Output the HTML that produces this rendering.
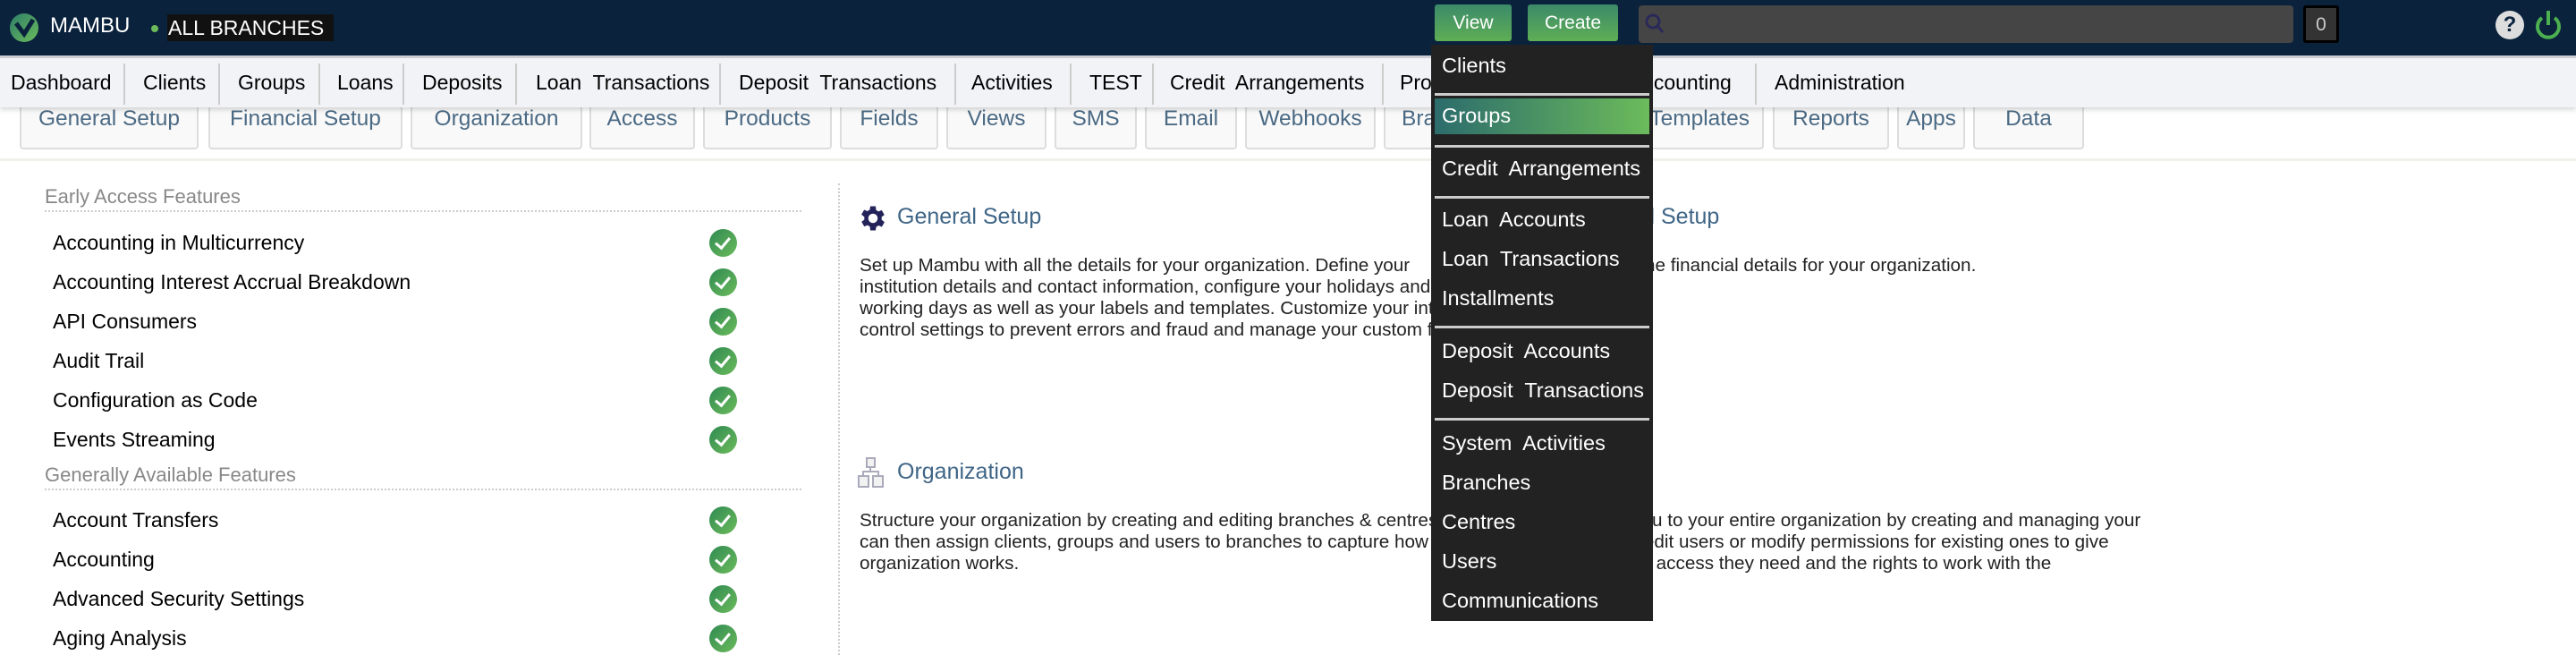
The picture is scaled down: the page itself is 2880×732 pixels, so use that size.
<!DOCTYPE html>
<html><head><meta charset="utf-8"><style>
*{margin:0;padding:0;box-sizing:border-box}
body{width:2880px;height:732px;overflow:hidden;background:#fff;font-family:"Liberation Sans",sans-serif;position:relative}
.a{position:absolute;white-space:nowrap}
#top{position:absolute;left:0;top:0;width:2880px;height:62px;background:#0a223c}
#nav{position:absolute;left:0;top:62px;width:2880px;height:58px;background:#f2f3f7;border-top:3px solid #c9ccd2;box-shadow:0 3px 5px rgba(0,0,0,.15);z-index:3}
.ni{position:absolute;top:14px;font-size:23px;color:#000}
.ns{position:absolute;top:6px;width:2px;height:46px;background:#ccc}
.tab{position:absolute;top:108px;height:59px;background:#f9f9f9;border:2px solid #ddd;border-top:none;border-radius:0 0 4px 4px;color:#4b6a84;font-size:24.5px;text-align:center;padding-top:11px;z-index:1;white-space:nowrap}
.btn{position:absolute;top:5px;height:41px;background:linear-gradient(#3b8a6a,#5fae55);border-radius:3px;color:#fff;font-size:21px;text-align:center;padding-top:9px}
#dd{position:absolute;left:1600px;top:50px;width:248px;height:644px;background:#222;z-index:5}
.di{position:absolute;left:12px;color:#fff;font-size:23.5px;white-space:nowrap}
.dsep{position:absolute;left:4px;width:240px;height:3px;background:#ccc}
.li{position:absolute;left:59px;font-size:23px;color:#000}
.ck{position:absolute;left:793px;width:31px;height:31px;border-radius:50%;background:linear-gradient(135deg,#2f8a52,#6cbb5b)}
.ck:after{content:"";position:absolute;left:10px;top:6px;width:7px;height:13px;border:solid #fff;border-width:0 3px 3px 0;transform:rotate(40deg)}
.hd{position:absolute;font-size:22px;color:#888}
.dl{position:absolute;left:50px;width:846px;border-top:2px dotted #ccc}
.h2{position:absolute;font-size:25px;color:#3f6586}
.p{position:absolute;font-size:20.7px;line-height:24px;color:#222;white-space:pre}
</style></head><body>
<div id="top">
 <svg class="a" style="left:10px;top:14px" width="34" height="34" viewBox="0 0 34 34"><defs><linearGradient id="g" x1="0" y1="0" x2="1" y2="1"><stop offset="0" stop-color="#2d7d6a"/><stop offset="1" stop-color="#6cbb5b"/></linearGradient></defs><circle cx="17" cy="17" r="16" fill="url(#g)"/><path d="M8 12 L17 24 L27 8" stroke="#0a223c" stroke-width="5" fill="none"/></svg>
 <div class="a" style="left:56px;top:15px;color:#fff;font-size:24px">MAMBU</div>
 <div class="a" style="left:169px;top:28px;width:8px;height:8px;border-radius:50%;background:#6cbb5b"></div>
 <div class="a" style="left:187px;top:16px;width:186px;height:30px;background:#111;color:#fff;font-size:23px;padding:2px 0 0 1px">ALL BRANCHES</div>
 <div class="btn" style="left:1604px;width:86px">View</div>
 <div class="btn" style="left:1708px;width:101px">Create</div>
 <div class="a" style="left:1832px;top:6px;width:732px;height:42px;background:#454545;border-radius:4px"></div>
 <svg class="a" style="left:1838px;top:14px" width="24" height="26"><circle cx="10" cy="10" r="7" stroke="#2a2a5a" stroke-width="3" fill="none"/><path d="M15 15 L21 22" stroke="#2a2a5a" stroke-width="3"/></svg>
 <div class="a" style="left:2575px;top:6px;width:40px;height:42px;background:#333;border:3px solid #000;border-radius:3px;color:#ccc;font-size:21px;text-align:center;padding-top:7px">0</div>
 <div class="a" style="left:2790px;top:12px;width:32px;height:32px;border-radius:50%;background:#ddd;color:#0a223c;font-weight:bold;font-size:24px;text-align:center;line-height:32px">?</div>
 <svg class="a" style="left:2832px;top:10px" width="34" height="36"><path d="M10 10 A12 12 0 1 0 24 10" stroke="#4caf50" stroke-width="4" fill="none"/><path d="M17 2 V18" stroke="#4caf50" stroke-width="4"/></svg>
</div>
<div id="nav">
 <div class="ni" style="left:12px">Dashboard</div><div class="ns" style="left:138px"></div>
 <div class="ni" style="left:160px">Clients</div><div class="ns" style="left:244px"></div>
 <div class="ni" style="left:266px">Groups</div><div class="ns" style="left:356px"></div>
 <div class="ni" style="left:377px">Loans</div><div class="ns" style="left:450px"></div>
 <div class="ni" style="left:472px">Deposits</div><div class="ns" style="left:576px"></div>
 <div class="ni" style="left:599px">Loan&nbsp; Transactions</div><div class="ns" style="left:804px"></div>
 <div class="ni" style="left:826px">Deposit&nbsp; Transactions</div><div class="ns" style="left:1067px"></div>
 <div class="ni" style="left:1086px">Activities</div><div class="ns" style="left:1196px"></div>
 <div class="ni" style="left:1218px">TEST</div><div class="ns" style="left:1288px"></div>
 <div class="ni" style="left:1308px">Credit&nbsp; Arrangements</div><div class="ns" style="left:1545px"></div>
 <div class="ni" style="left:1565px">Products</div>
 <div class="ni" style="left:1822px">Accounting</div><div class="ns" style="left:1962px"></div>
 <div class="ni" style="left:1984px">Administration</div>
</div>
<div class="tab" style="left:22px;width:200px">General Setup</div>
<div class="tab" style="left:233px;width:217px">Financial Setup</div>
<div class="tab" style="left:459px;width:192px">Organization</div>
<div class="tab" style="left:659px;width:118px">Access</div>
<div class="tab" style="left:786px;width:144px">Products</div>
<div class="tab" style="left:939px;width:110px">Fields</div>
<div class="tab" style="left:1058px;width:112px">Views</div>
<div class="tab" style="left:1179px;width:92px">SMS</div>
<div class="tab" style="left:1280px;width:103px">Email</div>
<div class="tab" style="left:1392px;width:146px">Webhooks</div>
<div class="tab" style="left:1547px;width:260px;text-align:left;padding-left:18px">Branding</div>
<div class="tab" style="left:1816px;width:156px;text-align:right;padding-right:14px">Templates</div>
<div class="tab" style="left:1982px;width:130px">Reports</div>
<div class="tab" style="left:2121px;width:76px">Apps</div>
<div class="tab" style="left:2206px;width:124px">Data</div>
<div class="a" style="left:0;top:177px;width:2880px;height:3px;background:#f1f1ec"></div>

<div class="hd" style="left:50px;top:207px">Early Access Features</div>
<div class="dl" style="top:235px"></div>
<div class="li" style="top:258px">Accounting in Multicurrency</div><div class="ck" style="top:256px"></div>
<div class="li" style="top:302px">Accounting Interest Accrual Breakdown</div><div class="ck" style="top:300px"></div>
<div class="li" style="top:346px">API Consumers</div><div class="ck" style="top:344px"></div>
<div class="li" style="top:390px">Audit Trail</div><div class="ck" style="top:388px"></div>
<div class="li" style="top:434px">Configuration as Code</div><div class="ck" style="top:432px"></div>
<div class="li" style="top:478px">Events Streaming</div><div class="ck" style="top:476px"></div>
<div class="hd" style="left:50px;top:518px">Generally Available Features</div>
<div class="dl" style="top:546px"></div>
<div class="li" style="top:568px">Account Transfers</div><div class="ck" style="top:566px"></div>
<div class="li" style="top:612px">Accounting</div><div class="ck" style="top:610px"></div>
<div class="li" style="top:656px">Advanced Security Settings</div><div class="ck" style="top:654px"></div>
<div class="li" style="top:700px">Aging Analysis</div><div class="ck" style="top:698px"></div>

<div class="a" style="left:937px;top:205px;height:527px;border-left:2px dotted #ccc"></div>
<svg class="a" style="left:958px;top:226px" width="36" height="36" viewBox="0 0 24 24"><path fill="#23235a" d="M19.4 13a7.5 7.5 0 0 0 0-2l2.1-1.6-2-3.5-2.5 1a7 7 0 0 0-1.7-1L15 3h-4l-.4 2.7a7 7 0 0 0-1.7 1l-2.5-1-2 3.5L6.6 11a7.5 7.5 0 0 0 0 2l-2.1 1.6 2 3.5 2.5-1a7 7 0 0 0 1.7 1L11 21h4l.4-2.7a7 7 0 0 0 1.7-1l2.5 1 2-3.5zM13 15.5a3.5 3.5 0 1 1 0-7 3.5 3.5 0 0 1 0 7z" transform="translate(-1 0)"/></svg>
<div class="h2" style="left:1003px;top:228px">General Setup</div>
<div class="p" style="left:961px;top:285px">Set up Mambu with all the details for your organization. Define your
institution details and contact information, configure your holidays and
working days as well as your labels and templates. Customize your internal
control settings to prevent errors and fraud and manage your custom fields.</div>
<div class="h2" style="left:1750px;top:228px">Financial Setup</div>
<div class="p" style="left:1624px;top:285px">Set up Mambu with all the financial details for your organization.</div>
<svg class="a" style="left:958px;top:510px" width="32" height="36"><g fill="#f2f2f2" stroke="#aab" stroke-width="2"><rect x="11" y="2" width="9" height="10"/><rect x="2" y="22" width="11" height="12"/><rect x="18" y="22" width="11" height="12"/></g><path d="M15 12 V17 H7 V22 M15 17 H24 V22" stroke="#aab" stroke-width="2" fill="none"/></svg>
<div class="h2" style="left:1003px;top:513px">Organization</div>
<div class="p" style="left:961px;top:570px">Structure your organization by creating and editing branches &amp; centres. You
can then assign clients, groups and users to branches to capture how your
organization works.</div>
<div class="p" style="left:1624px;top:570px">Control access to Mambu to your entire organization by creating and managing your
users. Create new and edit users or modify permissions for existing ones to give
them exactly the level of access they need and the rights to work with the</div>

<div id="dd">
 <div class="di" style="top:10px">Clients</div>
 <div class="dsep" style="top:54px"></div>
 <div class="a" style="left:4px;top:60px;width:240px;height:40px;background:linear-gradient(90deg,#2c6c6c,#6cbb5b)"></div>
 <div class="di" style="top:66px">Groups</div>
 <div class="dsep" style="top:112px"></div>
 <div class="di" style="top:125px">Credit&nbsp; Arrangements</div>
 <div class="dsep" style="top:169px"></div>
 <div class="di" style="top:182px">Loan&nbsp; Accounts</div>
 <div class="di" style="top:226px">Loan&nbsp; Transactions</div>
 <div class="di" style="top:270px">Installments</div>
 <div class="dsep" style="top:314px"></div>
 <div class="di" style="top:329px">Deposit&nbsp; Accounts</div>
 <div class="di" style="top:373px">Deposit&nbsp; Transactions</div>
 <div class="dsep" style="top:417px"></div>
 <div class="di" style="top:432px">System&nbsp; Activities</div>
 <div class="di" style="top:476px">Branches</div>
 <div class="di" style="top:520px">Centres</div>
 <div class="di" style="top:564px">Users</div>
 <div class="di" style="top:608px">Communications</div>
</div>
</body></html>
